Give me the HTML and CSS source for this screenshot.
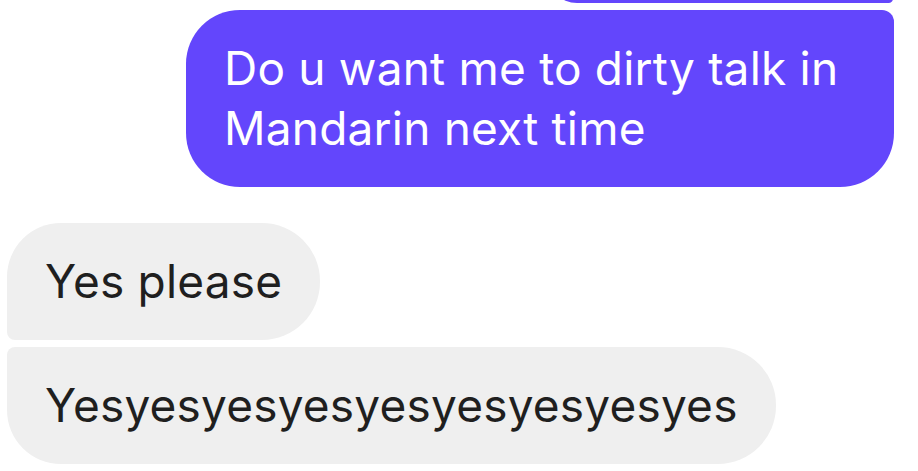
FILE: index.html
```html
<!DOCTYPE html>
<html lang="en">
<head>
    <meta charset="UTF-8">
    <meta name="viewport" content="width=device-width, initial-scale=1.0">
    <title>Chat</title>
    <link rel="stylesheet" href="styles.css">
</head>
<body>
    <div class="thread">
        <div class="row out">
            <div class="bubble sent prev"></div>
        </div>
        <div class="row out">
            <div class="bubble sent last">Do u want me to dirty talk in Mandarin next time</div>
        </div>

        <div class="row in first-in">
            <div class="bubble recv top">Yes please</div>
        </div>
        <div class="row in">
            <div class="bubble recv bottom">Yesyesyesyesyesyesyesyesyes</div>
        </div>
    </div>
</body>
</html>
```

FILE: styles.css
```css
*{
    box-sizing: border-box;
    margin: 0;
    padding: 0;
}

body{
    background: #fff;
    font-family: Inter, 'Noto Sans', sans-serif;
    overflow: hidden;
}

.thread{
    display: flex;
    flex-direction: column;
    gap: 7px;
    padding: 0 24px 0 7px;
}

.row{
    display: flex;
}

.row.out{
    justify-content: flex-end;
}

.row.in{
    justify-content: flex-start;
}

.first-in{
    margin-top: 29px;
}

.bubble{
    font-size: 46px;
    line-height: 60px;
    letter-spacing: 0.2px;
    padding: 28px 38px 29px;
}

.sent{
    background: #6346fc;
    color: #fff;
    max-width: 708px;
}

.prev{
    width: 346px;
    height: 60px;
    margin-top: -57px;
    margin-right: 1px;
    border-radius: 54px 12px 8px 54px;
}

.last{
    border-radius: 54px 12px 54px 54px;
}

.recv{
    background: #efefef;
    color: #1f1f1f;
    height: 117px;
}

.top{
    border-radius: 54px 58px 58px 8px;
}

.bottom{
    border-radius: 8px 58px 58px 54px;
}
```
